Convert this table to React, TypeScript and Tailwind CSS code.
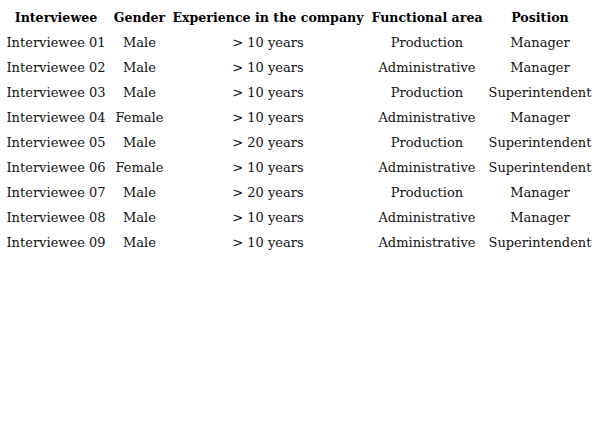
const rows = [
  ['Interviewee 01', 'Male', '> 10 years', 'Production', 'Manager'],
  ['Interviewee 02', 'Male', '> 10 years', 'Administrative', 'Manager'],
  ['Interviewee 03', 'Male', '> 10 years', 'Production', 'Superintendent'],
  ['Interviewee 04', 'Female', '> 10 years', 'Administrative', 'Manager'],
  ['Interviewee 05', 'Male', '> 20 years', 'Production', 'Superintendent'],
  ['Interviewee 06', 'Female', '> 10 years', 'Administrative', 'Superintendent'],
  ['Interviewee 07', 'Male', '> 20 years', 'Production', 'Manager'],
  ['Interviewee 08', 'Male', '> 10 years', 'Administrative', 'Manager'],
  ['Interviewee 09', 'Male', '> 10 years', 'Administrative', 'Superintendent'],
];

const headers = ['Interviewee', 'Gender', 'Experience in the company', 'Functional area', 'Position'];
const widths = ['w-[106px]', 'w-[61px]', 'w-[196px]', 'w-[122px]', 'w-[104px]'];

export default function App() {
  return (
    <div className="min-h-[445px] w-[601px] bg-white pl-[3px] pt-[5px] text-black" style={{ fontFamily: '"DejaVu Serif", serif' }}>
      <table className="table-fixed border-collapse">
        <thead>
          <tr className="h-[25px]">
            {headers.map((h, i) => (
              <th key={h} className={`${widths[i]} whitespace-nowrap p-0 pt-[2px] text-center text-[12.6px] font-bold`}>
                {h}
              </th>
            ))}
          </tr>
        </thead>
        <tbody>
          {rows.map((r) => (
            <tr key={r[0]} className="h-[25px]">
              {r.map((c, i) => (
                <td key={i} className="whitespace-nowrap p-0 text-center text-[13px] font-extralight text-[#111]">
                  {c}
                </td>
              ))}
            </tr>
          ))}
        </tbody>
      </table>
    </div>
  );
}
